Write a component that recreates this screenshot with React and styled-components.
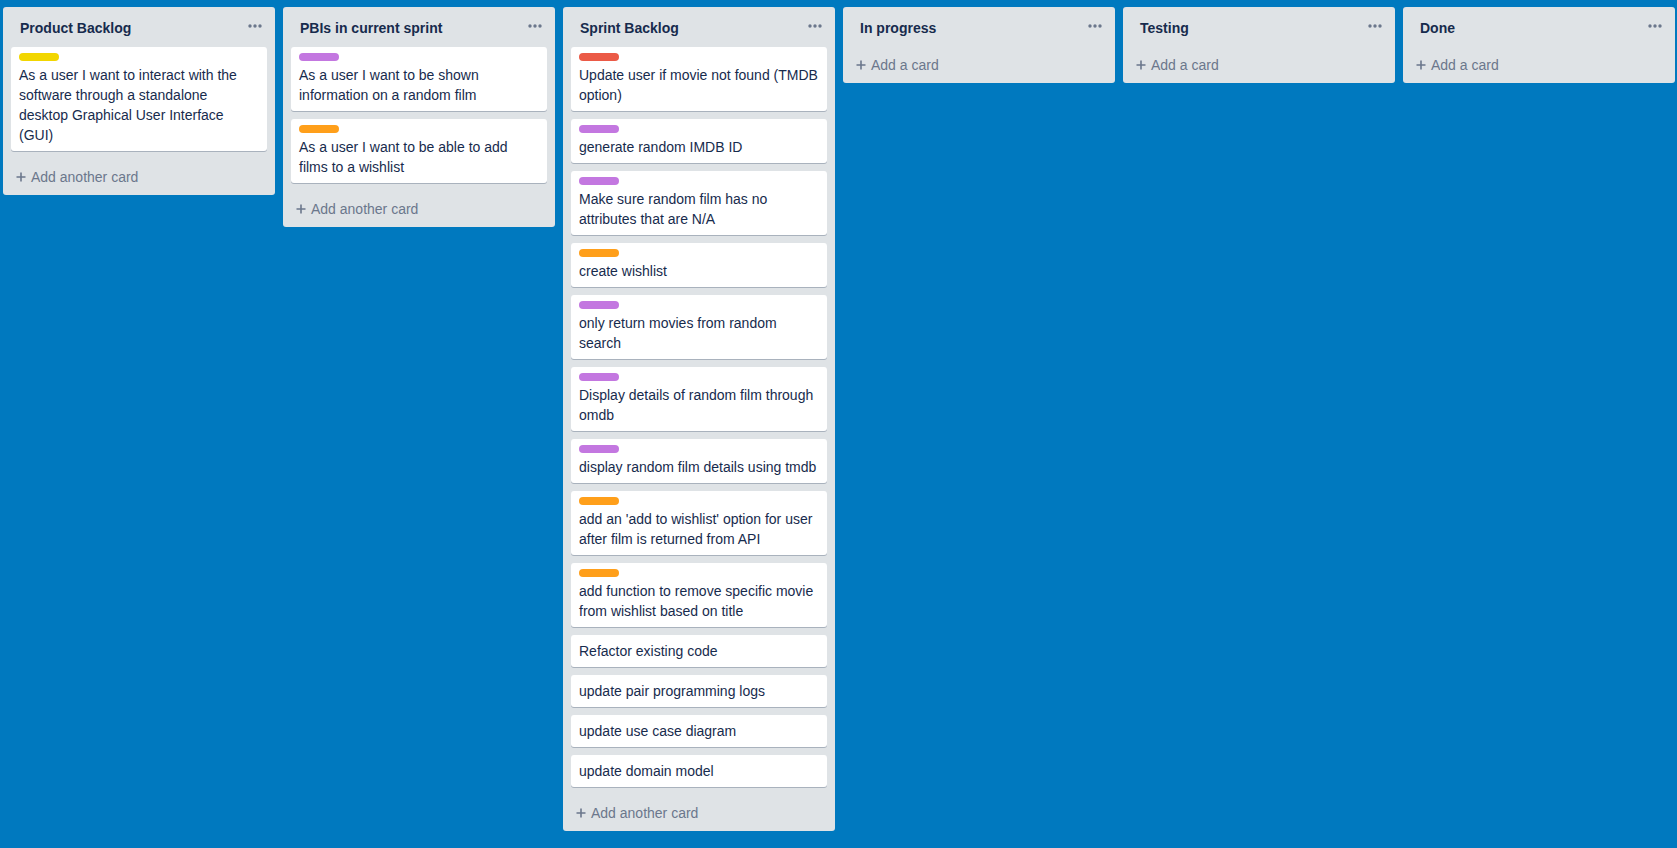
import React from 'react';
import styled, { createGlobalStyle } from 'styled-components';

const GlobalStyle = createGlobalStyle`
  html, body {
    margin: 0;
    padding: 0;
    height: 100%;
    overflow: hidden;
  }

  body {
    background: #0079bf;
    font-family: "Liberation Sans", Arial, sans-serif;
    font-size: 14px;
    line-height: 20px;
    color: #172b4d;
  }
`;

const LABEL_COLORS = {
  yellow: '#f2d600',
  purple: '#c377e0',
  orange: '#ff9f1a',
  red: '#eb5a46',
};

const lists = [
  {
    title: 'Product Backlog',
    cards: [
      {
        label: 'yellow',
        text: 'As a user I want to interact with the software through a standalone desktop Graphical User Interface (GUI)',
      },
    ],
  },
  {
    title: 'PBIs in current sprint',
    cards: [
      { label: 'purple', text: 'As a user I want to be shown information on a random film' },
      { label: 'orange', text: 'As a user I want to be able to add films to a wishlist' },
    ],
  },
  {
    title: 'Sprint Backlog',
    cards: [
      { label: 'red', text: 'Update user if movie not found (TMDB option)' },
      { label: 'purple', text: 'generate random IMDB ID' },
      { label: 'purple', text: 'Make sure random film has no attributes that are N/A' },
      { label: 'orange', text: 'create wishlist' },
      { label: 'purple', text: 'only return movies from random search' },
      { label: 'purple', text: 'Display details of random film through omdb' },
      { label: 'purple', text: 'display random film details using tmdb' },
      { label: 'orange', text: "add an 'add to wishlist' option for user after film is returned from API" },
      { label: 'orange', text: 'add function to remove specific movie from wishlist based on title' },
      { text: 'Refactor existing code' },
      { text: 'update pair programming logs' },
      { text: 'update use case diagram' },
      { text: 'update domain model' },
    ],
  },
  { title: 'In progress', cards: [] },
  { title: 'Testing', cards: [] },
  { title: 'Done', cards: [] },
];

const Board = styled.div`
  display: flex;
  align-items: flex-start;
  gap: 8px;
  padding: 7px 3px;
  height: 100vh;
  box-sizing: border-box;
`;

const List = styled.div`
  flex: 0 0 272px;
  width: 272px;
  background: #dfe3e6;
  border-radius: 3px;
  display: flex;
  flex-direction: column;
`;

const ListHeader = styled.div`
  display: flex;
  align-items: center;
  justify-content: space-between;
  padding: 11px 8px 9px 17px;
`;

const ListTitle = styled.h2`
  margin: 0;
  font-size: 14px;
  line-height: 20px;
  font-weight: 700;
  color: #172b4d;
`;

const MenuButton = styled.button`
  border: 0;
  background: transparent;
  padding: 0;
  margin: 0 5px 4px 0;
  display: flex;
  cursor: pointer;
`;

const Cards = styled.div`
  display: flex;
  flex-direction: column;
  gap: 8px;
  padding: 0 8px;
  margin-bottom: ${(p) => (p.$empty ? '0' : '8px')};
`;

const Card = styled.div`
  background: #fff;
  border-radius: 3px;
  box-shadow: 0 1px 0 rgba(9, 30, 66, 0.25);
  padding: 6px 8px 2px;
`;

const Label = styled.span`
  display: block;
  width: 40px;
  height: 8px;
  border-radius: 4px;
  margin-bottom: 4px;
  background: ${(p) => LABEL_COLORS[p.$color]};
`;

const CardText = styled.div`
  margin-bottom: 4px;
  color: #172b4d;
  word-wrap: break-word;
`;

const Composer = styled.div`
  padding: 4px 8px;
`;

const ComposerLink = styled.a`
  display: flex;
  align-items: center;
  gap: 2px;
  padding: 4px 2px;
  color: #6b778c;
  text-decoration: none;
  cursor: pointer;
`;

const PlusBox = styled.span`
  width: 16px;
  height: 20px;
  display: flex;
  align-items: center;
  justify-content: center;
`;

function Dots() {
  return (
    <svg width="14" height="4" viewBox="0 0 14 4">
      <circle cx="2" cy="2" r="1.7" fill="#6b778c" />
      <circle cx="7" cy="2" r="1.7" fill="#6b778c" />
      <circle cx="12" cy="2" r="1.7" fill="#6b778c" />
    </svg>
  );
}

function Plus() {
  return (
    <PlusBox>
      <svg width="10" height="10" viewBox="0 0 10 10">
        <path d="M5 0.5v9M0.5 5h9" stroke="#6b778c" strokeWidth="1.6" fill="none" />
      </svg>
    </PlusBox>
  );
}

function BoardList({ list }) {
  const empty = list.cards.length === 0;
  return (
    <List>
      <ListHeader>
        <ListTitle>{list.title}</ListTitle>
        <MenuButton aria-label="List actions">
          <Dots />
        </MenuButton>
      </ListHeader>
      <Cards $empty={empty}>
        {list.cards.map((card, i) => (
          <Card key={i}>
            {card.label && <Label $color={card.label} />}
            <CardText>{card.text}</CardText>
          </Card>
        ))}
      </Cards>
      <Composer>
        <ComposerLink>
          <Plus />
          {empty ? 'Add a card' : 'Add another card'}
        </ComposerLink>
      </Composer>
    </List>
  );
}

export default function App() {
  return (
    <>
      <GlobalStyle />
      <Board>
        {lists.map((list) => (
          <BoardList key={list.title} list={list} />
        ))}
      </Board>
    </>
  );
}
